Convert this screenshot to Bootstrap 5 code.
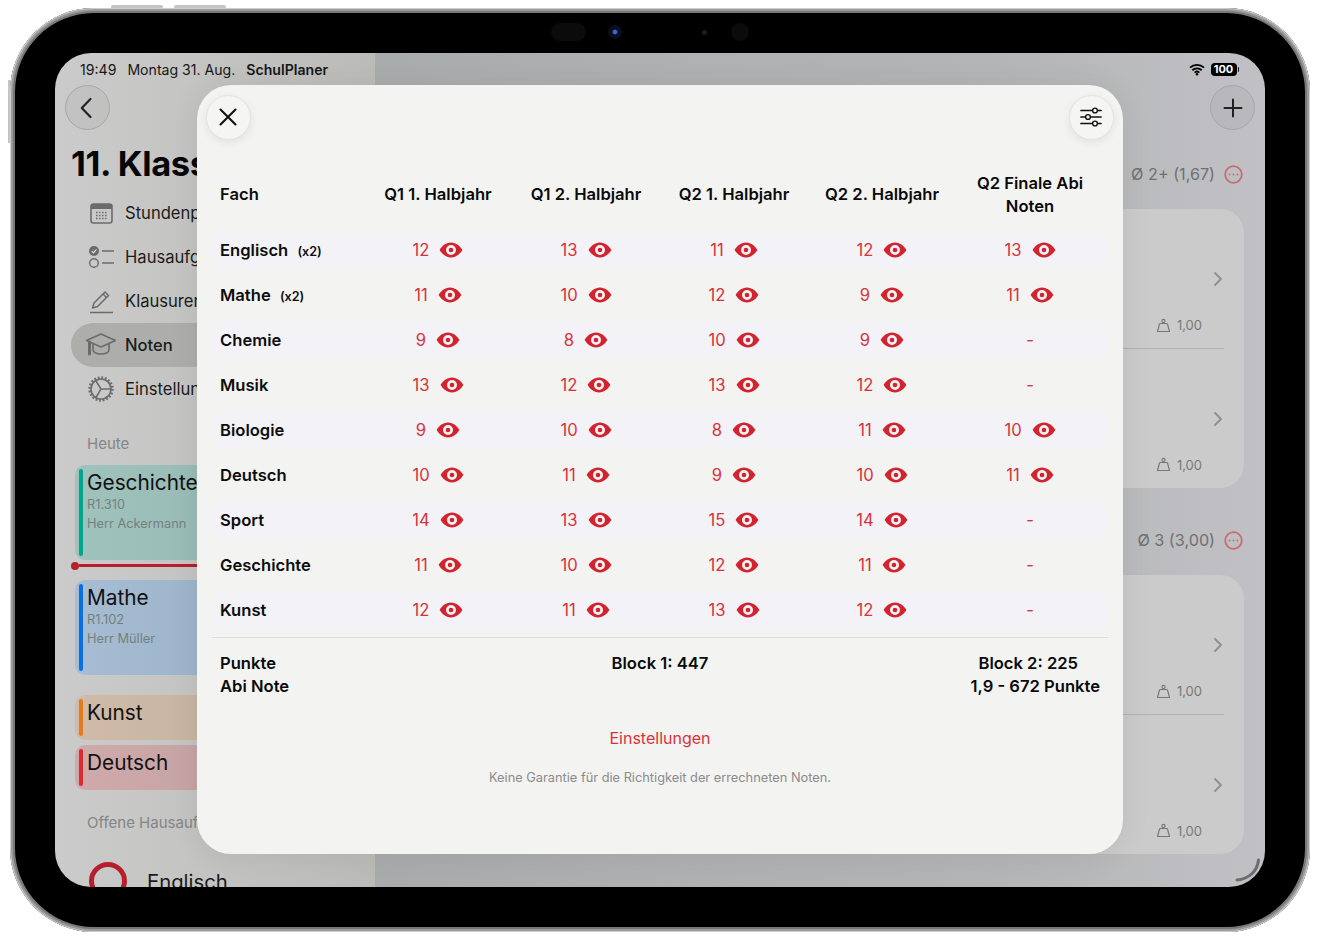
<!DOCTYPE html>
<html lang="de">
<head>
<meta charset="utf-8" />
<title>SchulPlaner Noten</title>
<link href="https://cdn.jsdelivr.net/npm/bootstrap@5.3.2/dist/css/bootstrap.min.css" rel="stylesheet" />
<style>
  body { margin: 0; background: #fff; font-family: Inter, "Liberation Sans", sans-serif; color: #0b0b0b; overflow: hidden; }
  svg { display: block; flex: none; }
  .tablet { position: relative; width: 1300px; height: 924px; margin: 8px 0 0 10px; padding: 0 45px 45px; background: #000; border-radius: 84px;
    box-shadow: inset 0 0 0 1px #cfcfcf, inset 0 0 0 3px #9a9a9a, inset 0 0 0 5px #777; }
  .hw-key { position: absolute; background: #c4c4c4; }
  .key-a { left: 101px; top: -3px; width: 52px; height: 3px; border-radius: 2px 2px 0 0; }
  .key-b { left: 164px; top: -3px; width: 52px; height: 3px; border-radius: 2px 2px 0 0; }
  .key-c { left: -2px; top: 72px; width: 2px; height: 63px; }
  .cam-strip { height: 45px; padding-top: 3px; }
  .cam-oval { width: 35px; height: 18px; margin-left: 496px; border-radius: 9px; background: #0b0b0b; }
  .cam-lens { width: 14px; height: 14px; margin-left: 22px; border-radius: 50%; background: radial-gradient(circle, #3d6fd0 0 1.5px, #0a0e20 3px); }
  .cam-dot { width: 5px; height: 5px; margin-left: 80px; border-radius: 50%; background: #1e1e1e; }
  .cam-round { width: 18px; height: 18px; margin-left: 24px; border-radius: 50%; background: #0b0b0b; }

  .screen { position: relative; height: 834px; border-radius: 36px; overflow: hidden; }
  .side-pane { width: 320px; background: linear-gradient(90deg, #cbcbcb, #bbbcb8); overflow: hidden; white-space: nowrap; }
  .detail-pane { background: linear-gradient(90deg, #a9acad 0%, #b4b5b6 70%, #c1c1c5 100%); }
  .status-text { height: 22px; margin-top: 6px; margin-bottom: -1px; padding-left: 25px; font-size: 14.1px; line-height: 22px; gap: 11px; color: #171717; }
  .round-top { width: 45px; height: 45px; padding: 0; margin-top: 5px; border: 1px solid #a6a6a6; border-radius: 50%; background: rgba(0,0,0,.035); }
  .back-wrap { padding-left: 9.5px; }
  .app-title { margin: 14px 0 0 16px; font-size: 34.5px; line-height: 40px; font-weight: 700; letter-spacing: -.4px; color: #060606; }
  .side-nav { margin-top: 7px; }
  .side-link { height: 44px; margin-left: 16px; padding-left: 15px; gap: 9px; font-size: 16.6px; color: #1c1c1c; }
  .side-link.is-active { background: #adaeab; border-radius: 22px 0 0 22px; font-weight: 500; }
  .side-cap { height: 20px; margin: 22.5px 0 11.5px 32px; font-size: 15px; line-height: 20px; color: #858585; }
  .lesson { margin-left: 20px; padding: 4px; gap: 4px; border-radius: 10px; }
  .lesson-tall { height: 95px; }
  .lesson-low { height: 45px; }
  .lesson-gap { margin-top: 20px; }
  .lesson-next { margin-top: 5px; }
  .lesson-bar { width: 4px; border-radius: 2px; }
  .lesson-name { font-size: 20.8px; line-height: 27px; color: #111; }
  .lesson-sub { font-size: 12.8px; line-height: 18.5px; color: #75807d; }
  .now-line { height: 11px; margin: 0 0 9px 16px; }
  .now-dot { width: 8px; height: 8px; border-radius: 50%; background: #b5202c; }
  .now-rule { height: 3px; background: #b5202c; }
  .hw-ring { width: 38px; height: 38px; margin-left: 34px; border: 5px solid #b5202c; border-radius: 50%; }
  .hw-name { margin-left: 20px; font-size: 20.3px; line-height: 40px; color: #1a1a1a; }
  .cap-last { margin-bottom: 29.5px; }

  .wifi-row { height: 22px; margin-top: 5px; padding-right: 26px; gap: 6px; }
  .batt { width: 26px; height: 13px; border-radius: 4px; background: #000; color: #fff; font-size: 11px; font-weight: 700; line-height: 13px; text-align: center; }
  .batt-nub { width: 1.5px; height: 5px; margin-left: -5px; background: #111; border-radius: 0 1px 1px 0; }
  .top-right { padding-right: 10px; }
  .avg-head { height: 24px; margin: 32px 22px 23px 0; gap: 9px; font-size: 16.2px; line-height: 24px; color: #6f7072; }
  .avg-head.second { margin-top: 40px; }
  .grade-card { margin: 0 21px 0 20px; height: 279px; border-radius: 24px; background: linear-gradient(90deg, #bcbdba, #cbcbcb 70%); }
  .grade-item { height: 139.5px; padding: 60px 21px 0 0; }
  .grade-item.lined { position: relative; }
  .grade-item.lined::after { content: ""; position: absolute; left: 20px; right: 20px; bottom: 0; border-bottom: 1px solid #b1b1ae; }
  .weigh-row { height: 20px; margin: 26px 21px 0 0; gap: 7px; font-size: 13px; line-height: 20px; color: #787878; }
  .home-arc { position: absolute; right: 4px; bottom: 5px; }

  .sheet { position: absolute; left: 142px; top: 32px; width: 926px; height: 769px; padding: 10px 15px 0; background: #f3f3f1; border-radius: 34px; box-shadow: 0 2px 30px rgba(0,0,0,.08); }
  .sheet-top { margin: -.5px -5.5px 0 -6.5px; }
  .round-sheet { width: 45px; height: 45px; padding: 0; border: 1px solid #e3e3e1; border-radius: 50%; background: #f5f5f3; box-shadow: 0 3px 9px rgba(0,0,0,.07); }
  .grade-grid { display: grid; grid-template-columns: 152px repeat(5, 148px); align-items: center; }
  .grid-head { margin-top: 32.5px; height: 44px; font-size: 16.6px; line-height: 22.5px; font-weight: 600; text-align: center; color: #0a0a0a; }
  .grid-list { margin-top: 16px; row-gap: 9px; }
  .grade-line { height: 36px; font-size: 16.6px; }
  .grade-line.tint { background: #f2f2f7; border-radius: 10px; }
  .subj { padding-left: 8px; font-weight: 600; text-align: left; color: #0d0d0d; }
  .subj small { margin-left: 5px; font-size: 12.6px; font-weight: 600; }
  .score { gap: 10px; color: #d8323c; font-weight: 400; }
  .sum-block { margin-top: 9px; padding: 14px 8px 0; border-top: 1px solid #dededc; font-size: 16.6px; line-height: 22.5px; font-weight: 600; color: #0a0a0a; }
  .sum-grid { display: grid; grid-template-columns: 1fr auto 1fr; }
  .sum-shift { padding-right: 14px; }
  .sheet-link { display: block; width: 100%; margin-top: 28px; padding: 0; font-size: 16px; line-height: 24px; color: #d8323c; text-decoration: none; }
  .sheet-link:hover { color: #d8323c; }
  .sheet-note { margin: 18px 0 0; font-size: 12.8px; line-height: 18px; text-align: center; color: #8b8b8b; }
</style>
</head>
<body>
<div class="tablet">
  <span class="hw-key key-a"></span><span class="hw-key key-b"></span><span class="hw-key key-c"></span>
  <div class="cam-strip d-flex align-items-center">
    <span class="cam-oval"></span><span class="cam-lens"></span><span class="cam-dot"></span><span class="cam-round"></span>
  </div>

  <div class="screen d-flex">
    <div class="side-pane flex-shrink-0">
      <div class="status-text d-flex">
        <span>19:49</span><span>Montag 31. Aug.</span><span class="fw-semibold">SchulPlaner</span>
      </div>
      <div class="back-wrap">
        <button class="btn round-top d-flex align-items-center justify-content-center" type="button" aria-label="Zurück">
          <svg width="16" height="24" viewBox="0 0 16 24"><path d="M11.500 3 2.800 12l8.700 9" fill="none" stroke="#222" stroke-width="2.200" stroke-linecap="round" stroke-linejoin="round"/></svg>
        </button>
      </div>
      <div class="app-title">11. Klasse</div>
      <div class="side-nav">
        <div class="side-link d-flex align-items-center">
          <svg width="30" height="30" viewBox="0 0 30 30"><rect x="5" y="6" width="21" height="19" rx="2.500" fill="none" stroke="#6b6b6b" stroke-width="1.600"/><path d="M5 8.500A2.500 2.500 0 0 1 7.500 6h16A2.500 2.500 0 0 1 26 8.500V11H5z" fill="#6b6b6b"/><path d="M10 14.500h11M10 17.500h11M10 20.500h11" stroke="#6b6b6b" stroke-width="1.500" stroke-dasharray="1.500 1.500"/></svg>
          <span>Stundenplan</span>
        </div>
        <div class="side-link d-flex align-items-center">
          <svg width="30" height="30" viewBox="0 0 30 30"><circle cx="8" cy="9" r="5" fill="#6b6b6b"/><path d="m5.800 9 1.700 1.800 3-3.400" fill="none" stroke="#ddd" stroke-width="1.200"/><circle cx="8" cy="21" r="4.300" fill="none" stroke="#6b6b6b" stroke-width="1.400"/><path d="M16 9h12M16 21h12" stroke="#6b6b6b" stroke-width="1.500"/></svg>
          <span>Hausaufgaben</span>
        </div>
        <div class="side-link d-flex align-items-center">
          <svg width="30" height="30" viewBox="0 0 30 30"><path d="m8 17 11-11 3.500 3.500-11 11-5 1.500z" fill="none" stroke="#6b6b6b" stroke-width="1.500" stroke-linejoin="round"/><path d="m17 8 3.500 3.500" stroke="#6b6b6b" stroke-width="1.500"/><path d="M4 26.500h23" stroke="#6b6b6b" stroke-width="1.500"/></svg>
          <span>Klausuren</span>
        </div>
        <div class="side-link is-active d-flex align-items-center">
          <svg width="30" height="30" viewBox="0 0 30 30"><path d="M15 4 .5 10.500 15 17l14.500-6.500z" fill="none" stroke="#6b6b6b" stroke-width="1.600" stroke-linejoin="round"/><path d="M7 14v6c0 2.500 4 4 8 4s8-1.500 8-4v-6" fill="none" stroke="#6b6b6b" stroke-width="1.600"/><path d="M3.500 12v12" stroke="#6b6b6b" stroke-width="3" stroke-linecap="round"/></svg>
          <span>Noten</span>
        </div>
        <div class="side-link d-flex align-items-center">
          <svg width="30" height="30" viewBox="0 0 30 30"><circle cx="15" cy="15" r="10" fill="none" stroke="#6b6b6b" stroke-width="1.600"/><circle cx="15" cy="15" r="11.500" fill="none" stroke="#6b6b6b" stroke-width="2.400" stroke-dasharray="1.800 1.810"/><path d="M15 15 10 7M15 15h9.500M15 15l-5 8.500" stroke="#6b6b6b" stroke-width="1.500"/></svg>
          <span>Einstellungen</span>
        </div>
      </div>
      <div class="side-cap">Heute</div>
      <div class="lesson lesson-tall d-flex" style="background:linear-gradient(90deg,#9fc2bc,#92b4ae)">
        <span class="lesson-bar" style="background:#00a68c"></span>
        <div><div class="lesson-name">Geschichte</div><div class="lesson-sub">R1.310</div><div class="lesson-sub">Herr Ackermann</div></div>
      </div>
      <div class="now-line d-flex align-items-center"><span class="now-dot"></span><span class="now-rule flex-grow-1"></span></div>
      <div class="lesson lesson-tall d-flex" style="background:linear-gradient(90deg,#a6bdd4,#90a9bd)">
        <span class="lesson-bar" style="background:#0a6fe0"></span>
        <div><div class="lesson-name">Mathe</div><div class="lesson-sub">R1.102</div><div class="lesson-sub">Herr Müller</div></div>
      </div>
      <div class="lesson lesson-low lesson-gap d-flex" style="background:linear-gradient(90deg,#cfbba8,#bcac98)">
        <span class="lesson-bar" style="background:#e07b20"></span>
        <div class="lesson-name">Kunst</div>
      </div>
      <div class="lesson lesson-low lesson-next d-flex" style="background:linear-gradient(90deg,#d0aaab,#b99b9b)">
        <span class="lesson-bar" style="background:#d92c32"></span>
        <div class="lesson-name">Deutsch</div>
      </div>
      <div class="side-cap cap-last">Offene Hausaufgaben</div>
      <div class="d-flex"><span class="hw-ring"></span><span class="hw-name">Englisch</span></div>
    </div>

    <div class="detail-pane flex-grow-1">
      <div class="wifi-row d-flex justify-content-end align-items-center">
        <svg width="16" height="13" viewBox="0 0 17 13"><path d="M1 4.600a11 11 0 0 1 15 0M3.500 7.300a7.400 7.400 0 0 1 10 0M6 9.800a3.700 3.700 0 0 1 5 0" fill="none" stroke="#000" stroke-width="1.900"/><circle cx="8.500" cy="11.500" r="1.300"/></svg>
        <span class="batt">100</span><span class="batt-nub"></span>
      </div>
      <div class="top-right d-flex justify-content-end">
        <button class="btn round-top d-flex align-items-center justify-content-center" type="button" aria-label="Neu">
          <svg width="20" height="20" viewBox="0 0 20 20"><path d="M10 1.500v17M1.500 10h17" stroke="#222" stroke-width="2" stroke-linecap="round"/></svg>
        </button>
      </div>
      <div class="avg-head d-flex justify-content-end align-items-center">
        <span>Ø 2+ (1,67)</span>
        <svg width="19" height="19" viewBox="0 0 19 19"><circle cx="9.500" cy="9.500" r="8.300" fill="none" stroke="#cb6a70" stroke-width="1.800"/><path d="M5.600 9.500h.01M9.500 9.500h.01M13.400 9.500h.01" stroke="#cb6a70" stroke-width="1.900" stroke-linecap="round"/></svg>
      </div>
      <div class="grade-card">
        <div class="grade-item lined d-flex flex-column align-items-end">
          <svg width="10" height="20" viewBox="0 0 10 20"><path d="m2 4 6 6-6 6" fill="none" stroke="#8f8f8f" stroke-width="1.800" stroke-linecap="round" stroke-linejoin="round"/></svg>
          <div class="weigh-row d-flex align-items-center"><svg width="13" height="15" viewBox="0 0 13 15"><path d="M3.500 5.500h6c.5 0 .9.300 1.100.800l1.900 7.200H.5l1.900-7.200c.2-.5.600-.8 1.100-.8z" fill="none" stroke="#787878" stroke-width="1.200" stroke-linejoin="round"/><circle cx="6.500" cy="3" r="1.600" fill="none" stroke="#787878" stroke-width="1.100"/></svg><span>1,00</span></div>
        </div>
        <div class="grade-item d-flex flex-column align-items-end">
          <svg width="10" height="20" viewBox="0 0 10 20"><path d="m2 4 6 6-6 6" fill="none" stroke="#8f8f8f" stroke-width="1.800" stroke-linecap="round" stroke-linejoin="round"/></svg>
          <div class="weigh-row d-flex align-items-center"><svg width="13" height="15" viewBox="0 0 13 15"><path d="M3.500 5.500h6c.5 0 .9.300 1.100.800l1.900 7.200H.5l1.900-7.200c.2-.5.600-.8 1.100-.8z" fill="none" stroke="#787878" stroke-width="1.200" stroke-linejoin="round"/><circle cx="6.500" cy="3" r="1.600" fill="none" stroke="#787878" stroke-width="1.100"/></svg><span>1,00</span></div>
        </div>
      </div>
      <div class="avg-head second d-flex justify-content-end align-items-center">
        <span>Ø 3 (3,00)</span>
        <svg width="19" height="19" viewBox="0 0 19 19"><circle cx="9.500" cy="9.500" r="8.300" fill="none" stroke="#cb6a70" stroke-width="1.800"/><path d="M5.600 9.500h.01M9.500 9.500h.01M13.400 9.500h.01" stroke="#cb6a70" stroke-width="1.900" stroke-linecap="round"/></svg>
      </div>
      <div class="grade-card">
        <div class="grade-item lined d-flex flex-column align-items-end">
          <svg width="10" height="20" viewBox="0 0 10 20"><path d="m2 4 6 6-6 6" fill="none" stroke="#8f8f8f" stroke-width="1.800" stroke-linecap="round" stroke-linejoin="round"/></svg>
          <div class="weigh-row d-flex align-items-center"><svg width="13" height="15" viewBox="0 0 13 15"><path d="M3.500 5.500h6c.5 0 .9.300 1.100.800l1.900 7.200H.5l1.900-7.200c.2-.5.600-.8 1.100-.8z" fill="none" stroke="#787878" stroke-width="1.200" stroke-linejoin="round"/><circle cx="6.500" cy="3" r="1.600" fill="none" stroke="#787878" stroke-width="1.100"/></svg><span>1,00</span></div>
        </div>
        <div class="grade-item d-flex flex-column align-items-end">
          <svg width="10" height="20" viewBox="0 0 10 20"><path d="m2 4 6 6-6 6" fill="none" stroke="#8f8f8f" stroke-width="1.800" stroke-linecap="round" stroke-linejoin="round"/></svg>
          <div class="weigh-row d-flex align-items-center"><svg width="13" height="15" viewBox="0 0 13 15"><path d="M3.500 5.500h6c.5 0 .9.300 1.100.800l1.900 7.200H.5l1.900-7.200c.2-.5.600-.8 1.100-.8z" fill="none" stroke="#787878" stroke-width="1.200" stroke-linejoin="round"/><circle cx="6.500" cy="3" r="1.600" fill="none" stroke="#787878" stroke-width="1.100"/></svg><span>1,00</span></div>
        </div>
      </div>
    </div>

    <svg class="home-arc" width="26" height="24" viewBox="0 0 26 24"><path d="M23.500 2C22.500 13 14 21 2 22" fill="none" stroke="#6c6c6c" stroke-width="3" stroke-linecap="round"/></svg>

    <div class="sheet">
      <div class="sheet-top d-flex justify-content-between">
        <button class="btn round-sheet d-flex align-items-center justify-content-center" type="button" aria-label="Schließen">
          <svg width="20" height="20" viewBox="0 0 20 20"><path d="m2.500 2.500 15 15M17.500 2.500l-15 15" stroke="#111" stroke-width="2.100" stroke-linecap="round"/></svg>
        </button>
        <button class="btn round-sheet d-flex align-items-center justify-content-center" type="button" aria-label="Filter">
          <svg width="22" height="20" viewBox="0 0 22 20"><path d="M1 3.500h11M18 3.500h3M1 10h4M11 10h10M1 16.500h11M18 16.500h3" stroke="#111" stroke-width="1.700" stroke-linecap="round"/><circle cx="15" cy="3.500" r="2.400" fill="none" stroke="#111" stroke-width="1.400"/><circle cx="8" cy="10" r="2.400" fill="none" stroke="#111" stroke-width="1.400"/><circle cx="15" cy="16.500" r="2.400" fill="none" stroke="#111" stroke-width="1.400"/></svg>
        </button>
      </div>
      <div class="grade-grid grid-head">
        <div class="subj">Fach</div><div>Q1 1. Halbjahr</div><div>Q1 2. Halbjahr</div><div>Q2 1. Halbjahr</div><div>Q2 2. Halbjahr</div><div>Q2 Finale Abi<br />Noten</div>
      </div>
      <div id="gradeList" class="d-grid grid-list"></div>
      <div class="sum-block">
        <div class="sum-grid">
          <div>Punkte<br />Abi Note</div>
          <div class="text-center">Block 1: 447</div>
          <div class="d-flex justify-content-end"><div class="text-center"><div class="sum-shift">Block 2: 225</div><div>1,9 - 672 Punkte</div></div></div>
        </div>
      </div>
      <a class="btn sheet-link text-center" href="#">Einstellungen</a>
      <p class="sheet-note">Keine Garantie für die Richtigkeit der errechneten Noten.</p>
    </div>
  </div>
</div>

<script>
  const rows = [
    ["Englisch", "(x2)", 12, 13, 11, 12, 13],
    ["Mathe", "(x2)", 11, 10, 12, 9, 11],
    ["Chemie", "", 9, 8, 10, 9, null],
    ["Musik", "", 13, 12, 13, 12, null],
    ["Biologie", "", 9, 10, 8, 11, 10],
    ["Deutsch", "", 10, 11, 9, 10, 11],
    ["Sport", "", 14, 13, 15, 14, null],
    ["Geschichte", "", 11, 10, 12, 11, null],
    ["Kunst", "", 12, 11, 13, 12, null],
  ];
  const eye =
    '<svg width="24" height="16" viewBox="0 0 24 16"><path fill-rule="evenodd" fill="#d3232e" d="M12 .6C6.600.6 2.800 4.400.6 8c2.200 3.600 6 7.400 11.400 7.400S21.200 11.600 23.400 8C21.200 4.400 17.400.6 12 .6zm0 2.400a5 5 0 1 1 0 10 5 5 0 0 1 0-10z"/><circle cx="12" cy="8" r="2.300" fill="#d3232e"/></svg>';
  let html = "";
  rows.forEach(function (r, i) {
    html += '<div class="grade-grid grade-line' + (i % 2 == 0 ? " tint" : "") + '">';
    html += '<div class="subj">' + r[0] + (r[1] ? " <small>" + r[1] + "</small>" : "") + "</div>";
    for (let c = 2; c < 7; c++) {
      if (r[c] === null) {
        html += '<div class="score d-flex justify-content-center">-</div>';
      } else {
        html += '<div class="score d-flex justify-content-center align-items-center"><span>' + r[c] + "</span>" + eye + "</div>";
      }
    }
    html += "</div>";
  });
  document.getElementById("gradeList").innerHTML = html;
</script>
<script src="https://cdn.jsdelivr.net/npm/bootstrap@5.3.2/dist/js/bootstrap.bundle.min.js"></script>
</body>
</html>
